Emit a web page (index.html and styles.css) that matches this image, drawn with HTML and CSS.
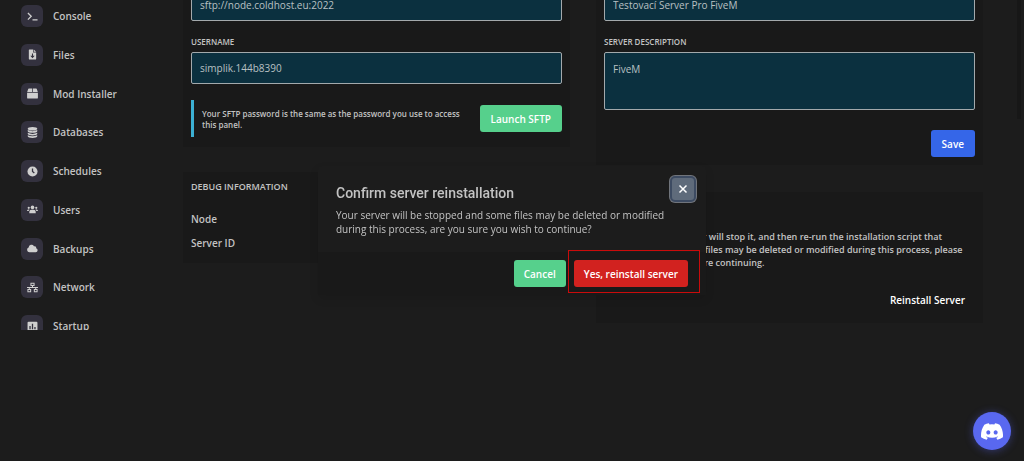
FILE: index.html
```html
<!DOCTYPE html>
<html lang="en">
<head>
<meta charset="utf-8">
<title>Server settings</title>
<link rel="stylesheet" href="styles.css">
</head>
<body>
<div class="layout">
  <nav class="sidebar">
    <ul class="nav-list">
      <li><a class="nav-link" href="#"><span class="nav-icon"><svg viewBox="0 0 12 12"><path d="M1 2.2 4.6 5.8 1 9.4M6 9.6h5.5" fill="none" stroke="currentColor" stroke-width="1.4"/></svg></span>Console</a></li>
      <li><a class="nav-link" href="#"><span class="nav-icon"><svg viewBox="0 0 12 12"><path fill-rule="evenodd" d="M2.6.5h4v3.2h3.4v6.8a1 1 0 0 1-1 1H3a1 1 0 0 1-1-1V1.100a.6.6 0 0 1 .6-.6ZM5.400 5v2.400H3.600L6 10l2.400-2.600H6.600V5Z"/><path d="M7.300.5 10 3H7.300Z"/></svg></span>Files</a></li>
      <li><a class="nav-link" href="#"><span class="nav-icon"><svg viewBox="0 0 12 12"><path d="M1.900.5h3.700v3.900H.200L1.300 1Q1.500.5 1.900.5ZM6.400.5h3.700q.4 0 .6.500l1.100 3.400H6.400ZM.1 5.100h11.800v5.400a1 1 0 0 1-1 1H1.100a1 1 0 0 1-1-1Z"/></svg></span>Mod Installer</a></li>
      <li><a class="nav-link" href="#"><span class="nav-icon"><svg viewBox="0 0 12 12"><ellipse cx="6" cy="1.900" rx="5.200" ry="1.900"/><path d="M.8 3.300q5.200 2.400 10.400 0v1.300C11.200 7 .8 7 .8 4.600ZM.8 6.300q5.200 2.400 10.400 0v1.100c0 2.400-10.400 2.400-10.400 0ZM.8 9q5.200 2.400 10.400 0v1.100c0 2.500-10.400 2.500-10.400 0Z"/></svg></span>Databases</a></li>
      <li><a class="nav-link" href="#"><span class="nav-icon"><svg viewBox="0 0 12 12"><circle cx="6" cy="6" r="5.500"/><path class="cut" d="M6 2.600V6l2 1.700"/></svg></span>Schedules</a></li>
      <li><a class="nav-link" href="#"><span class="nav-icon"><svg viewBox="0 0 12 12"><circle cx="6" cy="3.700" r="2"/><circle cx="1.900" cy="4.200" r="1.200"/><circle cx="10.100" cy="4.200" r="1.200"/><path d="M2.500 10V8.500q0-2.100 2.200-2.100h2.600q2.200 0 2.200 2.100V10ZM0 7.700q0-1.700 1.300-1.700h1.500Q2 6.600 1.900 7.700ZM12 7.700Q12 6 10.700 6H9.200q.8.600.9 1.700Z"/></svg></span>Users</a></li>
      <li><a class="nav-link" href="#"><span class="nav-icon"><svg viewBox="0 0 12 12"><path d="M2.700 10.200A2.700 2.700 0 0 1 1.800 5 3.100 3.100 0 0 1 7.600 3.500 1.900 1.900 0 0 1 10 5.600a2.400 2.400 0 0 1-.4 4.600Z"/></svg></span>Backups</a></li>
      <li><a class="nav-link" href="#"><span class="nav-icon"><svg viewBox="0 0 12 12"><path d="M4.300 1.300h3.400v2.500H4.300ZM1 8.200h3v2.500H1ZM8 8.200h3v2.500H8ZM6 3.800V6M0 6h12M2.500 6v2.200M9.500 6v2.200" fill="none" stroke="currentColor" stroke-width="1.100"/></svg></span>Network</a></li>
      <li><a class="nav-link" href="#"><span class="nav-icon"><svg viewBox="0 0 12 12"><rect x=".6" y=".8" width="10.800" height="10.400" rx="1.200"/><path class="cut" d="M3.300 5.500V9M6 3V9M8.700 6.500V9"/></svg></span>Startup</a></li>
    </ul>
  </nav>

  <main class="columns">
    <div class="column column-left">
      <section class="card sftp">
        <input class="field" aria-label="Server address" value="sftp://node.coldhost.eu:2022" readonly>
        <label class="label" for="username">Username</label>
        <input class="field" id="username" value="simplik.144b8390" readonly>
        <div class="sftp-row">
          <p class="notice">Your SFTP password is the same as the password you use to access this panel.</p>
          <button class="btn btn-wide btn-green" type="button">Launch SFTP</button>
        </div>
      </section>
      <section class="card debug">
        <h2 class="heading">Debug Information</h2>
        <p class="debug-row">Node</p>
        <p class="debug-row">Server ID</p>
      </section>
    </div>
    <div class="column column-right">
      <section class="card details">
        <input class="field" aria-label="Server name" value="Testovací Server Pro FiveM">
        <label class="label" for="description">Server Description</label>
        <textarea class="field field-area" id="description">FiveM</textarea>
        <div class="actions"><button class="btn btn-wide btn-blue" type="button">Save</button></div>
      </section>
      <section class="card reinstall">
        <p class="reinstall-text">Reinstalling your server will stop it, and then re-run the installation script that initially set it up. Some files may be deleted or modified during this process, please back up your data before continuing.</p>
        <div class="actions"><button class="btn btn-plain" type="button">Reinstall Server</button></div>
      </section>
    </div>
  </main>
</div>

<div class="scroll-thumb"></div>

<div class="overlay">
  <div class="modal" role="dialog" aria-labelledby="modal-title">
    <div class="modal-body">
      <div class="modal-copy">
        <h2 class="modal-title" id="modal-title">Confirm server reinstallation</h2>
        <p class="modal-text">Your server will be stopped and some files may be deleted or modified during this process, are you sure you wish to continue?</p>
      </div>
      <button class="close" type="button" aria-label="Close"><svg viewBox="0 0 10 10"><path d="M1.500 1.500 8.500 8.500M8.500 1.500 1.500 8.500"/></svg></button>
    </div>
    <div class="modal-footer">
      <button class="btn btn-green" type="button">Cancel</button>
      <div class="marked"><button class="btn btn-red" type="button">Yes, reinstall server</button></div>
    </div>
  </div>
</div>

<button class="discord" type="button" aria-label="Discord chat"><svg viewBox="0 0 24 18"><path fill-rule="evenodd" d="M20.300 1.500A20 20 0 0 0 15.300 0l-.7 1.300a18 18 0 0 0-5.300 0L8.600 0a20 20 0 0 0-5 1.500C.5 6.200-.3 10.700.1 15.200A20 20 0 0 0 6.200 18l1.300-2.100-2-1 .5-.4c4 1.800 8.200 1.800 12.100 0l.5.400-2 1L17.900 18a20 20 0 0 0 6-2.800c.5-5.200-.8-9.700-3.600-13.700ZM8 12.400c-1.200 0-2.200-1.100-2.200-2.400S6.800 7.600 8 7.600s2.200 1.100 2.200 2.400-1 2.400-2.200 2.400Zm8 0c-1.200 0-2.200-1.100-2.200-2.400s1-2.400 2.200-2.400 2.200 1.100 2.200 2.400-1 2.400-2.200 2.400Z"/></svg></button>
</body>
</html>
```

FILE: styles.css
```css
* { box-sizing: border-box; }

body {
  margin: 0;
  height: 100vh;
  overflow: hidden;
  background: #1c1c1c;
  color: #c3c3c3;
  font-family: "Open Sans", "Noto Sans", sans-serif;
  font-size: 10px;
  font-weight: 600;
}

h2, p, ul { margin: 0; padding: 0; }

button, input, textarea { font: inherit; }

.layout { display: flex; align-items: flex-start; }

.sidebar {
  flex: none;
  width: 183px;
  height: 330px;
  padding: 5px 0 0 21px;
  overflow: hidden;
}

.nav-list {
  display: flex;
  flex-direction: column;
  justify-content: space-between;
  height: 332px;
  list-style: none;
}

.nav-link {
  display: flex;
  align-items: center;
  gap: 10px;
  color: #c3c3c3;
  font-size: 10px;
  text-decoration: none;
}

.nav-icon {
  display: grid;
  place-items: center;
  width: 22px;
  height: 22px;
  border-radius: 6px;
  background: #33313e;
}

.nav-icon svg { width: 11px; height: 11px; fill: #cfcfcf; color: #cfcfcf; }
.nav-icon .cut { fill: none; stroke: #33313e; stroke-width: 1.4; }

.columns {
  flex: 1;
  display: grid;
  grid-template-columns: 1fr 1fr;
  gap: 26px;
  margin: -11px 41px 0 0;
}

.column { display: flex; flex-direction: column; }
.column-left { gap: 25px; }
.column-right { gap: 27px; }

.card { padding: 0 8px 8px; background: #191919; }

.field {
  display: block;
  width: 100%;
  height: 32px;
  padding: 0 8px;
  border: 1px solid #a3a9ac;
  border-radius: 2px;
  outline: none;
  background: #0b303f;
  color: #b9c0c3;
  font-size: 10px;
  font-weight: 400;
  line-height: 14px;
  resize: none;
}

.field-area { height: 58px; padding: 9px 8px; }

.label {
  display: block;
  margin: 15px 0 4px;
  font-size: 8px;
  line-height: 12px;
  text-transform: uppercase;
}

.sftp-row {
  display: flex;
  align-items: center;
  justify-content: space-between;
  gap: 16px;
  margin: 16px 0 2px;
}

.notice {
  padding: 8px 0 7px 8px;
  border-left: 3px solid #3cb0d3;
  font-size: 8px;
  line-height: 11px;
}

.btn {
  flex: none;
  height: 27px;
  padding: 0 10px;
  border: 0;
  border-radius: 3px;
  color: #fff;
  font-size: 10px;
  white-space: nowrap;
}

.btn-wide { padding: 0 11px; }
.btn-green { background: #56d08c; }
.btn-blue { background: #3566e8; }
.btn-red { background: #d2221f; }
.btn-plain { background: none; }

.heading { font-size: 9px; font-weight: 600; line-height: 14px; text-transform: uppercase; }

.debug { padding-top: 8px; padding-bottom: 8px; }
.debug .heading { margin-bottom: 13px; }
.debug-row { font-size: 10px; line-height: 24px; }

.actions { display: flex; justify-content: flex-end; margin-top: 20px; }

.reinstall { padding-top: 38px; padding-bottom: 10px; }
.reinstall-text { font-size: 9px; line-height: 13px; }
.reinstall .actions { margin-top: 17px; }

.scroll-thumb { position: absolute; top: 0; right: 3px; width: 4px; height: 119px; background: #171717; }

.overlay {
  position: fixed;
  inset: 0;
  display: flex;
  align-items: center;
  justify-content: center;
}

.modal {
  width: 388px;
  background: #1c1c1c;
  border-radius: 4px;
  box-shadow: 0 4px 10px rgba(0, 0, 0, 0.1);
}

.modal-body {
  display: flex;
  align-items: flex-start;
  padding: 10px 10px 16px 18px;
}

.modal-copy { flex: 1; padding-top: 8px; }
.modal-title { font-family: Roboto, sans-serif; font-size: 14px; font-weight: 500; line-height: 18px; }
.modal-text { margin: 6px -16px 0 0; font-size: 10px; font-weight: 500; line-height: 14px; }

.close {
  display: grid;
  place-items: center;
  width: 26px;
  height: 26px;
  padding: 0;
  border: 2px solid #3d4b62;
  border-radius: 5px;
  background: #5f6b7b;
  box-shadow: 0 0 0 1px #70747b;
}

.close svg { width: 10px; height: 10px; fill: none; stroke: #fff; stroke-width: 1.5; }

.modal-footer {
  display: flex;
  justify-content: flex-end;
  gap: 8px;
  padding: 8px 18px;
  background: #191919;
}

.marked { position: relative; }

.marked::after {
  content: "";
  position: absolute;
  inset: -10px -12px -6px -6px;
  border: 1px solid #c90b0b;
  pointer-events: none;
}

.discord {
  position: fixed;
  right: 13px;
  bottom: 11px;
  display: grid;
  place-items: center;
  width: 38px;
  height: 38px;
  padding: 0;
  border: 0;
  border-radius: 50%;
  background: #5968f0;
  box-shadow: 0 1px 8px rgba(88, 101, 242, 0.4);
}

.discord svg { width: 22px; height: 17px; fill: #fff; }
```
